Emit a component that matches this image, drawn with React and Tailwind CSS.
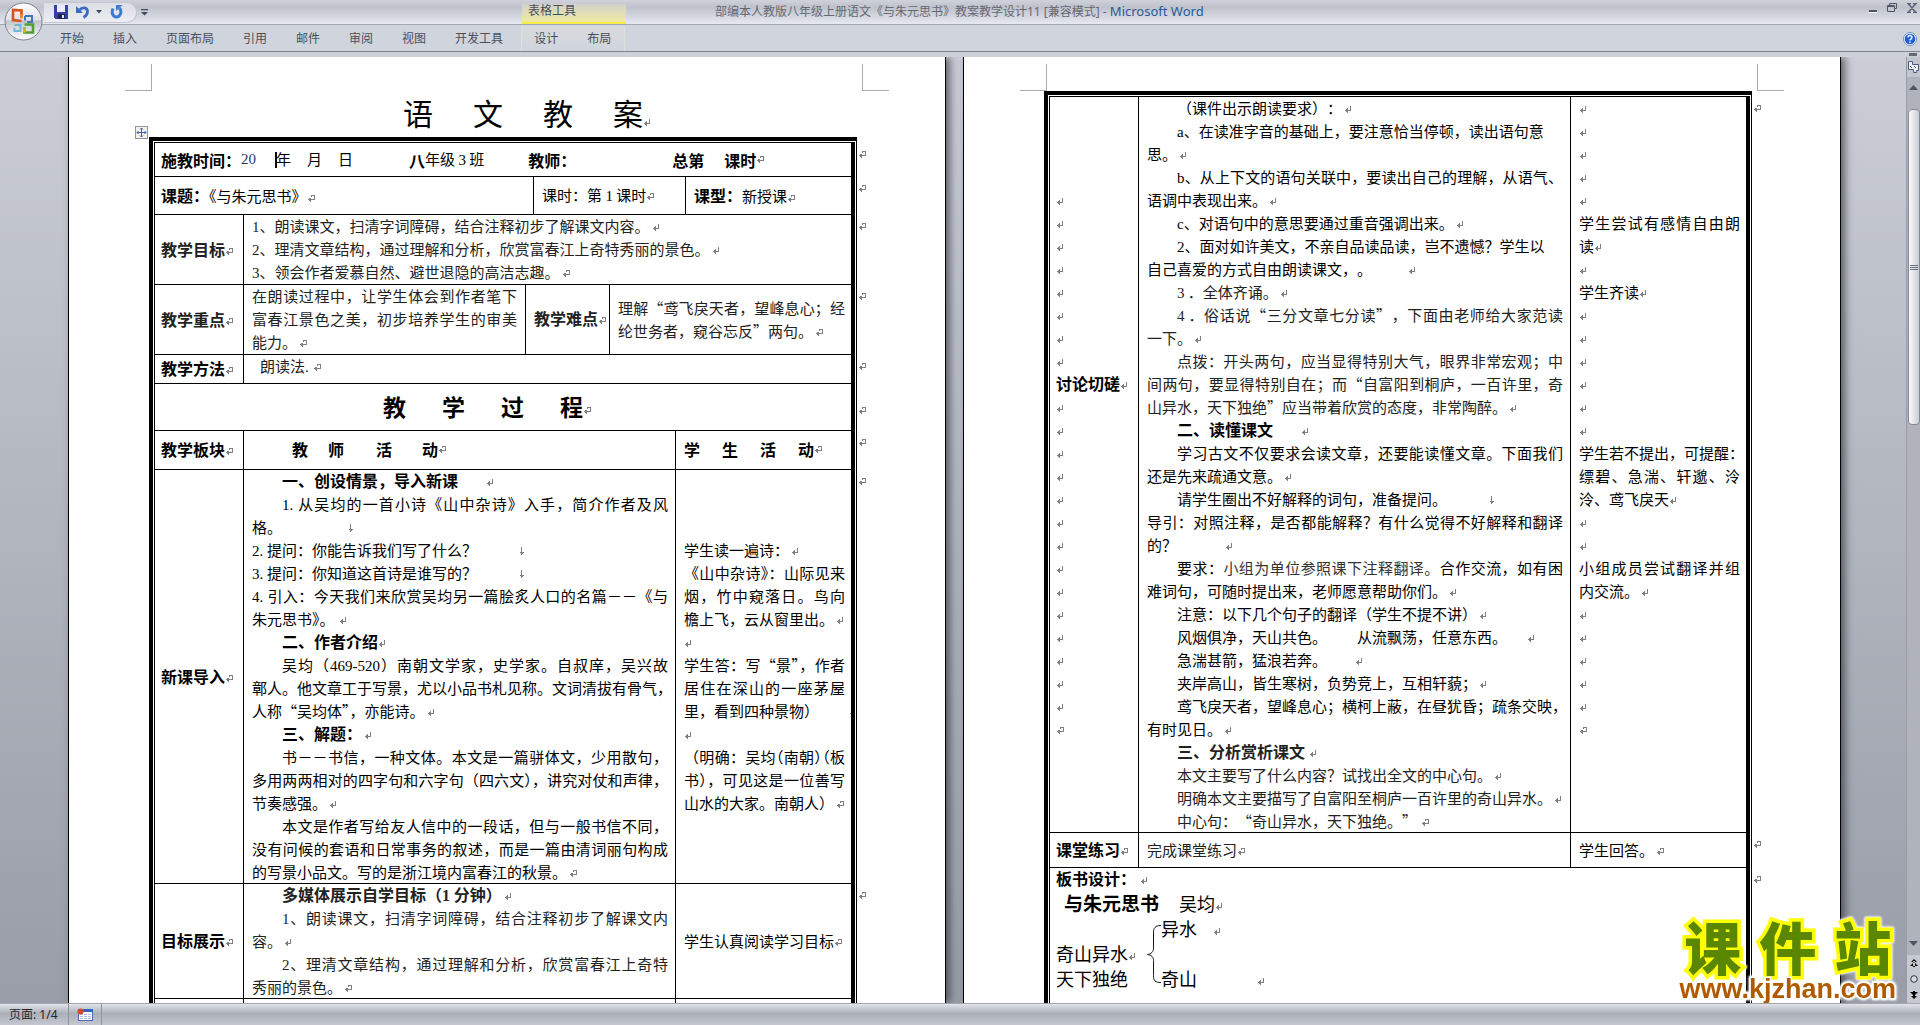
import React from "react";

/* Latin letters and digits are set in a serif face inside the Chinese text. */
function mix(children) {
  return React.Children.map(children, (child) => {
    if (typeof child !== "string") return child;
    return child.split(/([0-9a-z.-]+)/).map((part, i) =>
      i % 2 ? (
        <span key={i} className="font-['Liberation_Serif',serif]">
          {part}
        </span>
      ) : (
        part
      )
    );
  });
}

function Mark({ type = "p", className = "ml-0.5" }) {
  return (
    <svg
      viewBox="0 0 8 9"
      aria-hidden="true"
      className={"inline-block h-[9px] w-2 shrink-0 fill-none stroke-[#808080] " + className}
      shapeRendering="crispEdges"
    >
      {type === "p" && <path d="M6.5 1v4.5H1M3.500 3v5M2.500 4v3" />}
      {type === "c" && <path d="M4 1.500h3.500v4H1M4.500 1v2M3.500 4v4M2.500 4v3" />}
      {type === "d" && <path d="M4.500 0v8M2.500 5.500h4M3.500 6.500h2" />}
    </svg>
  );
}

function Line({ j, indent, bold, mark, m, children }) {
  return (
    <p
      className={
        "h-[23px] whitespace-nowrap leading-[21px] " +
        (j ? "[text-align-last:justify] " : "") +
        (indent ? "pl-[30px] " : "") +
        (bold ? "text-[16px] font-bold" : "")
      }
    >
      {mix(children)}
      {mark && <Mark type={mark} className={m} />}
    </p>
  );
}

function Blanks({ n, last }) {
  return Array.from({ length: n }, (_, i) => (
    <Line key={i} mark={last && i === n - 1 ? "c" : "p"} m="ml-0" />
  ));
}

function Num({ children }) {
  return <span className="inline-block w-[15px] text-left font-['Liberation_Serif',serif] [text-align-last:left]">{children}</span>;
}

function Cell({ last, top, className = "px-2", children, span, markTop = "h-[23px]" }) {
  return (
    <td
      colSpan={span}
      className={
        "relative border-b border-black " +
        (top ? "align-top " : "align-middle ") +
        (last ? "" : "border-r ") +
        className
      }
    >
      {children}
      {last && (
        <span className={"absolute left-full top-0 ml-[7px] flex items-center " + markTop}>
          <Mark type="c" className="" />
        </span>
      )}
    </td>
  );
}

function Label({ children }) {
  return (
    <td className="whitespace-nowrap border-b border-r border-black pb-0.5 pl-1.5 align-middle text-[16px] font-bold">
      {children}
      <Mark type="c" className="" />
    </td>
  );
}

function Frame({ children }) {
  return (
    <div className="relative ml-20 mr-[88px] border-l-4 border-r border-t-4 border-black pl-px pr-px pt-px">
      <div className="border-l border-r-4 border-t border-black">{children}</div>
    </div>
  );
}

function Page({ children }) {
  return (
    <article className="w-[878px] shrink-0 border-x border-black bg-white text-[15px] text-black shadow-[4px_0_8px_rgba(40,42,50,0.65)]">
      <div className="flex h-[34px] justify-between px-14 pt-[7px]">
        <div className="w-[27px] border-b border-r border-[#a8abb5]" />
        <div className="w-[27px] border-b border-l border-[#a8abb5]" />
      </div>
      {children}
    </article>
  );
}

function PageOne() {
  return (
    <Page>
      <h1 className="flex h-[46px] items-center justify-center gap-10 pb-1 pl-8 text-[30px]">
        <span>语</span>
        <span>文</span>
        <span>教</span>
        <span className="relative">
          案<Mark type="p" className="absolute bottom-2 left-full" />
        </span>
      </h1>
      <Frame>
        <svg viewBox="0 0 13 13" aria-hidden="true" className="absolute -left-[18px] -top-[15px] h-[13px] w-[13px]">
          <rect x=".5" y=".5" width="12" height="12" fill="#f4f2ea" stroke="#98968f" />
          <path d="M6.500 2v9M2 6.500h9M5 3.500l1.500-1.500L8 3.500M5 9.500l1.500 1.500L8 9.500M3.500 5L2 6.500l1.500 1.500M9.500 5L11 6.500 9.500 8" fill="none" stroke="#3b62b8" />
        </svg>
        <table className="w-full table-fixed border-separate border-spacing-0">
          <colgroup>
            <col className="w-[89px]" />
            <col className="w-[282px]" />
            <col className="w-[8px]" />
            <col className="w-[76px]" />
            <col className="w-[66px]" />
            <col className="w-[10px]" />
            <col />
          </colgroup>
          <tbody>
            <tr className="h-[34px]">
              <Cell last span={7} className="pl-1.5">
                <div className="flex items-center whitespace-nowrap">
                  <b className="text-[16px]">施教时间：</b>
                  <span className="font-['Liberation_Serif',serif] text-[#1d3a5f]">20</span>
                  <span className="relative ml-5">
                    <span className="absolute -left-px top-1 h-4 w-0.5 bg-black" />年
                  </span>
                  <span className="ml-4">月</span>
                  <span className="ml-4">日</span>
                  <b className="ml-14 text-[16px]">八</b>
                  <span>{mix("年级 3 班")}</span>
                  <b className="ml-11 text-[16px]">教师：</b>
                  <b className="ml-24 text-[16px]">总第</b>
                  <b className="ml-5 text-[16px]">课时</b>
                  <Mark type="c" className="" />
                </div>
              </Cell>
            </tr>
            <tr className="h-[38px]">
              <Cell span={3} className="whitespace-nowrap pl-1.5">
                <b className="text-[16px]">课题：</b>《与朱元思书》
                <Mark type="c" className="" />
              </Cell>
              <Cell span={3} className="whitespace-nowrap pl-2">
                {mix("课时：第 1 课时")}
                <Mark type="c" className="" />
              </Cell>
              <Cell last className="whitespace-nowrap pl-2">
                <b className="text-[16px]">课型：</b>新授课
                <Mark type="c" className="" />
              </Cell>
            </tr>
            <tr className="h-[70px] text-[#222]">
              <Label>教学目标</Label>
              <Cell last span={6}>
                <Line mark="p">1、朗读课文，扫清字词障碍，结合注释初步了解课文内容。</Line>
                <Line mark="p">2、理清文章结构，通过理解和分析，欣赏富春江上奇特秀丽的景色。</Line>
                <Line mark="c">3、领会作者爱慕自然、避世退隐的高洁志趣。</Line>
              </Cell>
            </tr>
            <tr className="h-[70px] text-[#222]">
              <Label>教学重点</Label>
              <Cell>
                <Line j>在朗读过程中，让学生体会到作者笔下</Line>
                <Line j>富春江景色之美，初步培养学生的审美</Line>
                <Line mark="c">能力。</Line>
              </Cell>
              <Cell span={2} className="pl-2">
                <Line bold mark="c" m="">教学难点</Line>
              </Cell>
              <Cell last span={3} className="pl-2 pr-1.5">
                <Line j>理解“鸢飞戾天者，望峰息心；经</Line>
                <Line mark="c">纶世务者，窥谷忘反”两句。</Line>
              </Cell>
            </tr>
            <tr className="h-[29px]">
              <Label>教学方法</Label>
              <Cell last top span={6} className="px-4 text-[#222]">
                <Line mark="c" m="ml-1">朗读法.</Line>
              </Cell>
            </tr>
            <tr className="h-[47px]">
              <Cell last span={7} className="" markTop="h-[52px]">
                <h2 className="flex items-center justify-center gap-9 pb-0.5 pr-10 text-[23px] font-bold leading-[30px]">
                  <span>教</span>
                  <span>学</span>
                  <span>过</span>
                  <span className="relative">
                    程<Mark type="c" className="absolute bottom-1.5 left-full" />
                  </span>
                </h2>
              </Cell>
            </tr>
            <tr className="h-[39px]">
              <Label>教学板块</Label>
              <Cell span={4}>
                <div className="flex items-center pb-0.5 pl-10 text-[16px] font-bold">
                  <span>教</span>
                  <span className="ml-5">师</span>
                  <span className="ml-8">活</span>
                  <span className="ml-[30px]">动</span>
                  <Mark type="c" className="" />
                </div>
              </Cell>
              <Cell last span={2}>
                <div className="flex items-center pb-0.5 text-[16px] font-bold">
                  <span>学</span>
                  <span className="ml-[22px]">生</span>
                  <span className="ml-[22px]">活</span>
                  <span className="ml-[22px]">动</span>
                  <Mark type="c" className="" />
                </div>
              </Cell>
            </tr>
            <tr>
              <Label>新课导入</Label>
              <Cell top span={4} className="pl-2 pr-[7px]">
                <div className="-mb-px">
                  <Line indent bold mark="p" m="ml-7">一、创设情景，导入新课</Line>
                  <Line j indent><Num>1.</Num>从吴均的一首小诗《山中杂诗》入手，简介作者及风</Line>
                  <Line mark="d" m="ml-16">格。</Line>
                  <Line mark="d" m="ml-10"><Num>2.</Num>提问：你能告诉我们写了什么？</Line>
                  <Line mark="d" m="ml-10"><Num>3.</Num>提问：你知道这首诗是谁写的？</Line>
                  <Line j><Num>4.</Num>引入：今天我们来欣赏吴均另一篇脍炙人口的名篇－－《与</Line>
                  <Line mark="p" m="ml-1">朱元思书》。</Line>
                  <Line indent bold mark="p" m="">二、作者介绍</Line>
                  <Line j indent>吴均（469-520）南朝文学家，史学家。自叔庠，吴兴故</Line>
                  <Line j>鄣人。他文章工于写景，尤以小品书札见称。文词清拔有骨气，</Line>
                  <Line mark="p">人称“吴均体”，亦能诗。</Line>
                  <Line indent bold mark="p">三、解题：</Line>
                  <Line j indent>书－－书信，一种文体。本文是一篇骈体文，少用散句，</Line>
                  <Line j>多用两两相对的四字句和六字句（四六文），讲究对仗和声律，</Line>
                  <Line mark="p">节奏感强。</Line>
                  <Line j indent>本文是作者写给友人信中的一段话，但与一般书信不同，</Line>
                  <Line j>没有问候的套语和日常事务的叙述，而是一篇由清词丽句构成</Line>
                  <Line mark="c">的写景小品文。写的是浙江境内富春江的秋景。</Line>
                </div>
              </Cell>
              <Cell last span={2} className="pl-2 pr-1.5">
                <Line mark="p">学生读一遍诗：</Line>
                <Line j>《山中杂诗》：山际见来</Line>
                <Line j>烟，竹中窥落日。鸟向</Line>
                <Line mark="p">檐上飞，云从窗里出。</Line>
                <Blanks n={1} />
                <Line j>学生答：写“景”，作者</Line>
                <Line j>居住在深山的一座茅屋</Line>
                <div className="-mr-1.5 overflow-hidden">
                  <Line mark="d" m="ml-7">里，看到四种景物）</Line>
                </div>
                <Blanks n={1} />
                <Line j>
                  （明确：吴均<span className="[font-feature-settings:'halt']">（南朝）（</span>板
                </Line>
                <Line j>书），可见这是一位善写</Line>
                <Line mark="c">山水的大家。南朝人）</Line>
              </Cell>
            </tr>
            <tr>
              <Label>目标展示</Label>
              <Cell top span={4} className="pl-2 pr-[7px] text-[#222]">
                <div className="-mb-px">
                  <Line indent bold mark="p">多媒体展示自学目标（1 分钟）</Line>
                  <Line j indent>1、朗读课文，扫清字词障碍，结合注释初步了解课文内</Line>
                  <Line mark="p">容。</Line>
                  <Line j indent>2、理清文章结构，通过理解和分析，欣赏富春江上奇特</Line>
                  <Line mark="c">秀丽的景色。</Line>
                </div>
              </Cell>
              <Cell last span={2}>
                <Line mark="c" m="">学生认真阅读学习目标</Line>
              </Cell>
            </tr>
            <tr className="h-[60px]">
              <Cell />
              <Cell span={4} />
              <Cell last span={2} />
            </tr>
          </tbody>
        </table>
      </Frame>
    </Page>
  );
}

function PageTwo() {
  return (
    <Page>
      <Frame>
        <table className="w-full table-fixed border-separate border-spacing-0">
          <colgroup>
            <col className="w-[89px]" />
            <col className="w-[432px]" />
            <col />
          </colgroup>
          <tbody>
            <tr>
              <Cell className="pl-1.5">
                <Blanks n={8} />
                <Line bold mark="p" m="">讨论切磋</Line>
                <Blanks n={15} last />
              </Cell>
              <Cell top className="pl-2 pr-[7px]">
                <div className="-mb-px [text-spacing-trim:space-all]">
                  <Line indent mark="p">（课件出示朗读要求）：</Line>
                  <Line indent>a、在读准字音的基础上，要注意恰当停顿，读出语句意</Line>
                  <Line mark="p">思。</Line>
                  <Line j indent>b、从上下文的语句关联中，要读出自己的理解，从语气、</Line>
                  <Line mark="p">语调中表现出来。</Line>
                  <Line indent mark="p">c、对语句中的意思要通过重音强调出来。</Line>
                  <Line indent>2、面对如许美文，不亲自品读品读，岂不遗憾？学生以</Line>
                  <Line mark="p" m="ml-9">自己喜爱的方式自由朗读课文，。</Line>
                  <div className="text-[#222]">
                    <Line indent mark="p">3 ．全体齐诵。</Line>
                    <Line j indent>4 ．俗话说“三分文章七分读”，下面由老师给大家范读</Line>
                    <Line mark="p">一下。</Line>
                    <Line j indent>点拨：开头两句，应当显得特别大气，眼界非常宏观；中</Line>
                    <Line j>间两句，要显得特别自在；而“自富阳到桐庐，一百许里，奇</Line>
                    <Line mark="p">山异水，天下独绝”应当带着欣赏的态度，非常陶醉。</Line>
                  </div>
                  <Line indent bold mark="p" m="ml-7">二、读懂课文</Line>
                  <Line j indent>学习古文不仅要求会读文章，还要能读懂文章。下面我们</Line>
                  <Line mark="p">还是先来疏通文意。</Line>
                  <Line indent mark="d" m="ml-10">请学生圈出不好解释的词句，准备提问。</Line>
                  <Line j>导引：对照注释，是否都能解释？有什么觉得不好解释和翻译</Line>
                  <Line mark="p" m="ml-12">的？</Line>
                  <Line j indent>
                    要求：<span className="text-[#333]">小组为单位参照课下注释翻译。</span>合作交流，如有困
                  </Line>
                  <Line mark="p">难词句，可随时提出来，老师愿意帮助你们。</Line>
                  <Line indent mark="p">注意：以下几个句子的翻译（学生不提不讲）</Line>
                  <Line indent mark="p" m="ml-5">风烟俱净，天山共色。　　从流飘荡，任意东西。</Line>
                  <Line indent mark="p" m="ml-7">急湍甚箭，猛浪若奔。</Line>
                  <Line indent mark="p">夹岸高山，皆生寒树，负势竞上，互相轩藐；</Line>
                  <Line j indent>鸢飞戾天者，望峰息心；横柯上蔽，在昼犹昏；疏条交映，</Line>
                  <Line mark="p">有时见日。</Line>
                  <div className="text-[#222]">
                    <Line indent bold mark="p" m="ml-1">三、分析赏析课文</Line>
                    <Line indent mark="p">本文主要写了什么内容？试找出全文的中心句。</Line>
                    <Line indent mark="p">明确本文主要描写了自富阳至桐庐一百许里的奇山异水。</Line>
                    <Line indent mark="c" m="ml-1">中心句：“奇山异水，天下独绝。”</Line>
                  </div>
                </div>
              </Cell>
              <Cell last top className="pl-2 pr-1.5">
                <Blanks n={5} />
                <Line j>学生尝试有感情自由朗</Line>
                <Line mark="p" m="">读</Line>
                <Blanks n={1} />
                <Line mark="p" m="">学生齐读</Line>
                <Blanks n={6} />
                <Line j>学生若不提出，可提醒：</Line>
                <Line j>缥碧、急湍、轩邈、泠</Line>
                <Line mark="p" m="">泠、鸢飞戾天</Line>
                <Blanks n={2} />
                <Line j>小组成员尝试翻译并组</Line>
                <Line mark="p">内交流。</Line>
                <Blanks n={6} last />
              </Cell>
            </tr>
            <tr className="h-[35px]">
              <Label>课堂练习</Label>
              <Cell className="pl-2 text-[#222]">
                <Line mark="c" m="">完成课堂练习</Line>
              </Cell>
              <Cell last>
                <Line mark="c">学生回答。</Line>
              </Cell>
            </tr>
            <tr>
              <Cell last top span={3} className="pl-1.5">
                <Line bold mark="p" m="ml-1">板书设计：</Line>
                <div className="relative -mt-px whitespace-nowrap text-[18px] leading-[25px]">
                  <p className="pl-2">
                    <b className="text-[19px]">与朱元思书</b>
                    <span className="ml-5">吴均</span>
                    <Mark type="p" className="" />
                  </p>
                  <p className="pl-[105px]">
                    异水
                    <Mark type="p" className="ml-4" />
                  </p>
                  <p>
                    奇山异水
                    <Mark type="p" className="" />
                  </p>
                  <p>
                    天下独绝<span className="ml-[33px]">奇山</span>
                    <Mark type="p" className="ml-[60px]" />
                  </p>
                  <p>
                    <Mark type="p" className="" />
                  </p>
                  <svg
                    viewBox="0 0 15 60"
                    aria-hidden="true"
                    className="absolute left-[91px] top-[34px] h-[60px] w-[15px] fill-none stroke-[#1a1a1a]"
                  >
                    <path d="M14 1.500C8 1.500 6.500 4 6.500 9v15c0 3.500-2 6-6 6.500 4 .5 6 2.500 6 6v15c0 5 1.500 7 7.500 7" />
                  </svg>
                </div>
              </Cell>
            </tr>
          </tbody>
        </table>
      </Frame>
    </Page>
  );
}

function OfficeOrb() {
  return (
    <button type="button" aria-label="Office" className="absolute left-[4px] top-[2px] z-10 h-[39px] w-[39px]">
      <svg viewBox="0 0 39 39" className="h-full w-full">
        <defs>
          <linearGradient id="orb" x1="0" y1="0" x2="0" y2="1">
            <stop offset="0" stopColor="#ffffff" />
            <stop offset=".45" stopColor="#dfe1e8" />
            <stop offset=".5" stopColor="#c3c6d0" />
            <stop offset="1" stopColor="#ffffff" />
          </linearGradient>
        </defs>
        <circle cx="19.500" cy="19.500" r="18.500" fill="url(#orb)" stroke="#7e828e" />
        <g fill="none" strokeWidth="2.600">
          <path d="M17.500 15V8.500L9 8v10l8.500 1" stroke="#d8501c" />
          <path d="M21 14h7v6h-5M21 18.500V14" stroke="#3f74c4" strokeWidth="2" />
          <path d="M10.500 23h6v6h-6v-3" stroke="#6fb7dc" strokeWidth="2" />
          <path d="M20.500 22.500H29v8h-8.500v-5" stroke="#53a031" />
          <path d="M17.500 12v4.500" stroke="#f08a24" />
          <path d="M20.500 30.500v-4" stroke="#f2b61d" />
        </g>
      </svg>
    </button>
  );
}

function QuickAccess() {
  return (
    <div className="ml-11 flex h-[21px] items-center rounded-r-full border border-l-0 border-[#c4c7d0] bg-gradient-to-b from-[#dcdee5] to-[#eceef3] pl-2.5 pr-3">
      <button type="button" aria-label="保存" className="mr-2">
        <svg viewBox="0 0 14 14" className="h-3.5 w-3.5" shapeRendering="crispEdges">
          <path d="M0 0h14v14H1L0 13z" fill="#3440a8" />
          <path d="M3 0h8v7H3z" fill="#e9edfb" />
          <path d="M4 9h7v5H4z" fill="#20244e" />
          <path d="M8 10h2v3H8z" fill="#e8e8f0" />
        </svg>
      </button>
      <button type="button" aria-label="撤消">
        <svg viewBox="0 0 14 14" className="h-3.5 w-3.5 fill-none stroke-[#3d6cc4]">
          <path d="M3.500 5C6 2 11.500 2 11.500 6.500c0 3-1.500 4.500-4 6" strokeWidth="2.800" />
          <path d="M0 1v7h7z" fill="#3d6cc4" stroke="none" />
        </svg>
      </button>
      <button type="button" aria-label="撤消选项" className="ml-1.5 mr-2">
        <svg viewBox="0 0 6 4" className="h-1 w-1.5 fill-[#44495a]"><path d="M0 0h6L3 3.500z" /></svg>
      </button>
      <button type="button" aria-label="重复">
        <svg viewBox="0 0 14 14" className="h-3.5 w-3.5 fill-none stroke-[#3d7ad2]">
          <path d="M3 3.500C1 8 3 12 6.500 12S12.500 7 9.500 3" strokeWidth="3" />
          <path d="M6 0h6.500L6 6z" fill="#3d7ad2" stroke="none" />
        </svg>
      </button>
    </div>
  );
}

const TABS = ["开始", "插入", "页面布局", "引用", "邮件", "审阅", "视图", "开发工具"];

function Header() {
  return (
    <header className="relative shrink-0 font-['Noto_Sans','Noto_Sans_CJK_SC',sans-serif] text-[12px] text-[#4b4f5a]">
      <OfficeOrb />
      <div className="relative flex h-[25px] items-center border-b border-[#a3a7b3] bg-gradient-to-b from-[#cfd2da] via-[#bfc2cb] via-30% to-[#e6e9f2]">
        <QuickAccess />
        <button type="button" aria-label="自定义快速访问工具栏" className="ml-1">
          <svg viewBox="0 0 7 7" className="h-[7px] w-[7px] fill-[#44495a]"><path d="M0 0h7v1.200H0zM0 3h7L3.500 6.500z" /></svg>
        </button>
        <div className="absolute left-[522px] top-1 h-5 w-[104px] border-b-2 border-[#f8ec4a] bg-gradient-to-b from-[#d3d2cc] to-[#f0eaa0] pl-1.5 leading-[14px]">
          表格工具
        </div>
        <div className="absolute left-[715px] whitespace-nowrap text-[#646874]">
          部编本人教版八年级上册语文《与朱元思书》教案教学设计11 [兼容模式] -{" "}
          <span className="text-[13px] text-[#2a5a96]">Microsoft Word</span>
        </div>
        <div className="ml-auto flex items-center gap-2.5 pb-2 pr-[3px]">
          <button type="button" aria-label="最小化">
            <svg viewBox="0 0 8 10" className="h-2.5 w-2"><path d="M0 7h8v2H0z" fill="#4b4f5e" /><path d="M0 9h8v1H0z" fill="#fff" /></svg>
          </button>
          <button type="button" aria-label="还原">
            <svg viewBox="0 0 10 10" className="h-2.5 w-2.5 fill-none stroke-[#4f566c]"><path d="M2.500 2V.5h7v5H8M.5 2.500h7v6h-7zM.5 3.500h7" /></svg>
          </button>
          <button type="button" aria-label="关闭">
            <svg viewBox="0 0 10 10" className="h-2.5 w-2.5 fill-none stroke-[#5d6478]"><path d="M1.500 1l7 8M8.500 1l-7 8M0 .5h4M6 .5h4M0 9.500h4M6 9.500h4" strokeWidth="1.500" /></svg>
          </button>
        </div>
      </div>
      <div className="flex h-[27px] items-center border-b border-[#7f838d] bg-[#d0d4dd] pl-[60px] pt-px">
        <nav className="flex gap-[29px]">
          {TABS.map((t) => (
            <button type="button" key={t}>{t}</button>
          ))}
        </nav>
        <nav className="ml-[18px] flex h-full w-[104px] items-center gap-[29px] border-x border-[#dfe0d8] bg-gradient-to-b from-[#d9dbdc] to-[#d0d4dd] pl-3">
          <button type="button">设计</button>
          <button type="button">布局</button>
        </nav>
        <button type="button" aria-label="帮助" className="ml-auto mr-[3px]">
          <svg viewBox="0 0 14 14" className="h-3.5 w-3.5">
            <circle cx="7" cy="7" r="6.500" fill="#fff" stroke="#6f8fd0" />
            <circle cx="7" cy="7" r="5.300" fill="#1f5cd6" />
            <path d="M5 5.600c0-2.800 4-2.600 4-.3C9 7 7 6.800 7 8.500M7 9.500V11" fill="none" stroke="#fff" strokeWidth="1.400" />
          </svg>
        </button>
      </div>
      <div className="flex h-[5px] items-center justify-end bg-[#cdd0d7] pr-[3px]">
        <div className="h-[3px] w-2 bg-[#666a74]" />
      </div>
    </header>
  );
}

function ScrollBar() {
  return (
    <div className="flex w-3.5 shrink-0 flex-col items-center border-l border-[#9a9da7] bg-[#b0b3bc]">
      <button type="button" aria-label="标尺" className="flex h-5 w-full items-center justify-center bg-[#c3c6ce]">
        <svg viewBox="0 0 13 14" className="h-3.5 w-[13px] fill-[#eef0f5] stroke-[#4a5b80]"><path d="M1.500 1.500h4v3h6v6h-2v2h-3v-3h-5zM3 6l2 2M7 6l2 2" /></svg>
      </button>
      <button type="button" aria-label="向上滚动" className="flex h-8 items-center justify-center pb-3">
        <svg viewBox="0 0 9 5" className="h-[5px] w-[9px] fill-[#4b5566]"><path d="M0 5h9L4.500 0z" /></svg>
      </button>
      <div className="flex h-[316px] w-3 flex-col items-center justify-center gap-px rounded-sm border border-[#868a95] bg-gradient-to-r from-[#fbfbfd] to-[#c9ccd4]">
        <span className="h-px w-2 bg-[#6b7080]" />
        <span className="h-px w-2 bg-[#6b7080]" />
        <span className="h-px w-2 bg-[#6b7080]" />
      </div>
      <div className="flex-1" />
      <button type="button" aria-label="向下滚动" className="flex h-5 items-center justify-center pb-1">
        <svg viewBox="0 0 9 5" className="h-[5px] w-[9px] fill-[#4b5566]"><path d="M0 0h9L4.500 5z" /></svg>
      </button>
      <div className="flex w-full flex-col items-center gap-2 bg-[#c6c9d1] pb-1 pt-1">
        <button type="button" aria-label="前一页">
          <svg viewBox="0 0 8 8" className="h-2 w-2 fill-black"><path d="M4 0L1 3h6zM4 3L0 7h8zM3 2h2v6H3z" /></svg>
        </button>
        <button type="button" aria-label="选择浏览对象">
          <svg viewBox="0 0 8 8" className="h-2 w-2"><circle cx="4" cy="4" r="3.300" fill="#d8dae0" stroke="#33363f" /></svg>
        </button>
        <button type="button" aria-label="下一页">
          <svg viewBox="0 0 8 8" className="h-2 w-2 fill-black"><path d="M4 8L1 5h6zM4 5L0 1h8zM3 0h2v6H3z" /></svg>
        </button>
      </div>
    </div>
  );
}

function Watermark() {
  return (
    <div className="absolute bottom-0 right-6 flex flex-col items-center whitespace-nowrap font-bold [filter:drop-shadow(0_0_1px_#fff)_drop-shadow(0_0_1px_#fff)]">
      <div className="flex gap-[18px] font-['Liberation_Sans','Noto_Sans_CJK_SC',sans-serif] text-[57px] font-black leading-[50px] text-[#5a8600] [-webkit-text-stroke:7px_#ffff00] [paint-order:stroke_fill]">
        <span>课</span>
        <span>件</span>
        <span>站</span>
      </div>
      <a
        href="http://www.kjzhan.com"
        className="font-['Liberation_Sans',sans-serif] text-[27px] leading-[28px] text-[#b05a00] [-webkit-text-stroke:3px_#fff] [paint-order:stroke_fill]"
      >
        www.kjzhan.com
      </a>
    </div>
  );
}

export default function App() {
  return (
    <div className="flex h-screen flex-col overflow-hidden font-['Noto_Sans_CJK_SC',sans-serif]" lang="zh-CN">
      <Header />
      <main className="relative flex min-h-0 flex-1 overflow-hidden bg-gradient-to-b from-[#cbced7] to-[#999da7]">
        <div className="flex min-w-0 flex-1 justify-center gap-[17px] overflow-hidden pl-[3px]">
          <PageOne />
          <PageTwo />
        </div>
        <ScrollBar />
        <Watermark />
      </main>
      <footer className="flex h-[22px] shrink-0 items-stretch border-t border-[#a3a6af] bg-gradient-to-b from-[#e2e4ea] via-[#abafb9] via-45% to-[#c4c7d0] font-['Noto_Sans','Noto_Sans_CJK_SC',sans-serif] text-[12px] text-[#23262e]">
        <button type="button" className="border-r border-[#8f939d] pl-[9px] pr-2.5">页面: 1/4</button>
        <button type="button" aria-label="录制宏" className="border-r border-[#8f939d] px-2">
          <svg viewBox="0 0 16 13" className="h-[13px] w-4">
            <rect x="1.500" y="1.500" width="14" height="11" fill="#fff" stroke="#4a6cb4" />
            <path d="M1 1h15v3H1z" fill="#3a62b8" />
            <path d="M3 6.500h11M3 8.500h11M3 10.500h11" stroke="#a8bce0" strokeDasharray="3 1" />
            <circle cx="3.500" cy="3.500" r="3" fill="#d8462c" />
          </svg>
        </button>
      </footer>
    </div>
  );
}
